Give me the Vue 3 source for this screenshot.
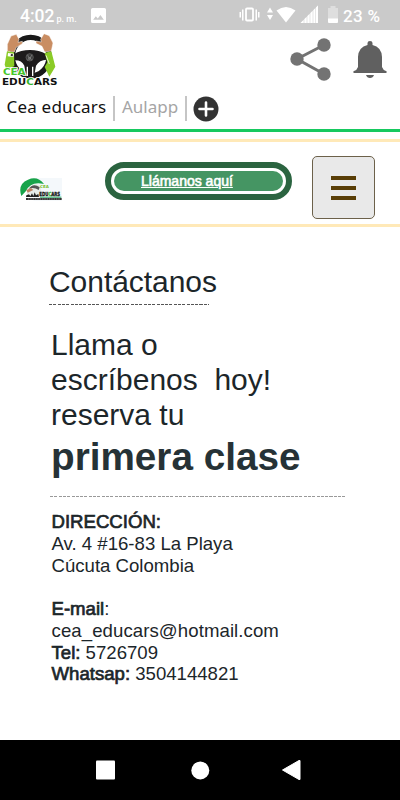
<template>
  <div class="screen">
    <header class="status-bar">
      <span class="time">4:02</span>
      <span class="period">p. m.</span>
      <svg class="photo-icon" viewBox="0 0 14 14">
        <path fill="#fff" fill-rule="evenodd" d="M1.500 0h11q1.500 0 1.500 1.500v11q0 1.500-1.500 1.500h-11Q0 14 0 12.500v-11Q0 0 1.500 0ZM2 11h10L8.800 6.500 6.300 9.700 4.500 7.700Z" />
      </svg>
      <svg class="status-icons" viewBox="0 0 102 30" fill="#fff">
        <rect x="7" y="8.500" width="7" height="12" rx="1" fill="none" stroke="#fff" stroke-width="1.800" />
        <path d="M3 9.500h1.500v11H3zM16.500 9.500H18v11h-1.500zM.5 12H2v5.500H.5zM19 12h1.500v5.500H19z" />
        <path d="M28 12.500l3-5 3 5zM28 15h6l-3 5z" />
        <path d="M37.500 10.500Q47 3.500 56.500 10.500L47 22.500Z" />
        <path fill="#e6e6e6" d="M61.500 23L79 5.500V23z" />
        <path d="M61.500 23l3-3v3zM65.500 19l2-2v6h-2zM68.500 16l2-2v9h-2zM71.500 13l2-2v12h-2zM74.500 10l1.500-1.500V23h-1.500zM77 7.500l2-2V23h-2z" />
        <path fill="#dedede" d="M89 8h2.500V6h5v2H99v11H89z" />
        <path d="M89 18.500h10V22q0 1-1 1h-8q-1 0-1-1z" />
      </svg>
      <span class="battery">23 %</span>
    </header>

    <div class="app-bar">
      <svg class="logo" viewBox="0 0 180 180">
        <!-- steering wheel -->
        <ellipse cx="92" cy="80" rx="55" ry="58" fill="none" stroke="#191919" stroke-width="16" />
        <path fill="#1d1b1c" d="M42 72Q62 60 90 60t48 12l2 17q-22 0-32 18l-6 33H78l-5-33Q64 89 42 91Z" />
        <path d="M82 110v28M98 110v28" stroke="#fff" stroke-width="4" />
        <circle cx="89" cy="82" r="11" fill="#3b3b3b" stroke="#6a6a6a" stroke-width="2" />
        <path d="M83 75l6 14 6-14M83 91l6-10 6 10" fill="none" stroke="#909090" stroke-width="2" />
        <!-- hands and sleeves -->
        <path fill="#c98d62" stroke="#fff" stroke-width="1.500" d="M22 43l11-25 16-5 8 15-3 9 13-3v7L49 52l-6 14-21-2Z" />
        <path fill="#c98d62" stroke="#fff" stroke-width="1.500" d="M159 39l-11-22-16-6-10 17 2 8-16-3v7l18 9 8 17 20-3Z" />
        <path fill="#8bcb27" d="M21 64l21 3 1 42-24 9-5-14Z" />
        <path fill="#8bcb27" d="M134 69l20-5 12 46-18 30-14-29 8-14Z" />
        <path d="M24 69l18 2-2 10-17-2Z" fill="#fff" />
        <path d="M33 72l6 1-1 6-6-1Z" fill="#333" />
        <path d="M138 76l10 26" stroke="#eaf7d5" stroke-width="3" />
        <text transform="translate(9 136) scale(1.290 1)" font-size="24" fill="#46c62b" stroke="#fff" stroke-width="5" paint-order="stroke">CEA</text>
        <text transform="translate(6 165) scale(1.160 1)" font-size="27" fill="#111" stroke="#fff" stroke-width="5" paint-order="stroke">EDU<tspan fill="#35b52a">C</tspan>ARS</text>
      </svg>
      <svg class="share" viewBox="0 0 44 46">
        <path d="M34 9L7 23l27 15" fill="none" stroke="#737373" stroke-width="3" />
        <circle cx="34" cy="9" r="6.700" fill="#737373" />
        <circle cx="7" cy="23" r="6.700" fill="#737373" />
        <circle cx="34" cy="38" r="6.700" fill="#737373" />
      </svg>
      <svg class="bell" viewBox="0 0 34 38" fill="#606060">
        <path d="M14.500 3q0-2 2.500-2t2.500 2v2q9 2 9.500 12v10q1 3 4 4H1q3-1 4-4V17Q5.500 7 14.500 5Z" />
        <path d="M.5 31h33v2H.5zM13 35h8q-1 3-4 3t-4-3z" />
      </svg>
    </div>

    <nav class="tabs">
      <span class="tab active">Cea educars</span>
      <span class="divider"></span>
      <span class="tab muted">Aulapp</span>
      <span class="divider"></span>
      <svg class="add" viewBox="0 0 26 26">
        <circle cx="13" cy="13" r="12.500" fill="#333" />
        <path d="M13 6.500v13M6.500 13h13" stroke="#fff" stroke-width="2.600" stroke-linecap="round" />
      </svg>
    </nav>

    <section class="site-header">
      <svg class="site-logo" viewBox="0 0 126 72">
        <path fill="#f4f8fb" d="M40 0h86v68H40z" />
        <path fill="#18a34a" d="M4 54Q-8 18 24 5q29-12 48 13Q33 8 18 39Z" />
        <path fill="#e7ece9" d="M19 49l14-25q14-12 29-1l3 31Z" />
        <path fill="#555" d="M25 33q15-20 34-5l-3 8q-15-10-31-3Z" />
        <path fill="#bd8062" d="M19 36l14-6 7 6-17 8z" />
        <path fill="#222" d="M19 52l8-3 4 5 5-8 4 8 4-11 4 9 7-4 2 9H18Z" />
        <path fill="#333" d="M18 60h107v6H18z" />
        <path d="M24 63h96" stroke="#aaa" stroke-width="2" stroke-dasharray="4 3" />
        <path fill="#20a559" d="M60 56h64v3H60z" />
        <text transform="translate(60 31)" font-size="12" fill="#74bd28">CEA</text>
        <text transform="translate(58 53) scale(0.690 1)" font-size="17" fill="#111" stroke="#111" stroke-width="1">EDU<tspan fill="#39b52d" stroke="#39b52d">C</tspan>ARS</text>
      </svg>
      <a class="call"><span>Llámanos aquí</span></a>
      <button class="menu" aria-label="Menu">
        <i></i><i></i><i></i>
      </button>
    </section>

    <main class="content">
      <h1>Contáctanos</h1>
      <div class="rule short"></div>
      <p class="lead">
        Llama o<br />
        escríbenos&nbsp; hoy!<br />
        reserva tu
      </p>
      <p class="lead-strong">primera clase</p>
      <div class="rule long"></div>
      <div class="details">
        <div v-for="(line, i) in details" :key="i" class="line">
          <b v-if="line.label">{{ line.label }}</b>{{ line.text }}
        </div>
      </div>
    </main>

    <footer class="nav-bar">
      <svg viewBox="0 0 20 20"><rect x="1" y="0.500" width="19" height="19" rx="1" fill="#fff" /></svg>
      <svg viewBox="0 0 20 20"><circle cx="12.300" cy="10.500" r="9" fill="#fff" /></svg>
      <svg viewBox="0 0 20 20"><path d="M1.500 10L18 .5h1v19h-1Z" fill="#fff" stroke="#fff" stroke-linejoin="round" /></svg>
    </footer>
  </div>
</template>

<script setup>
const details = [
  { label: 'DIRECCIÓN:', text: '' },
  { label: '', text: 'Av. 4 #16-83 La Playa' },
  { label: '', text: 'Cúcuta Colombia' },
  { label: '', text: '' },
  { label: 'E-mail', text: ':' },
  { label: '', text: 'cea_educars@hotmail.com' },
  { label: 'Tel:', text: ' 5726709' },
  { label: 'Whatsap:', text: ' 3504144821' }
]
</script>

<style>
body {
  margin: 0;
  background: #fff;
}
</style>

<style scoped>
.screen {
  width: 400px;
  height: 800px;
  display: flex;
  flex-direction: column;
  overflow: hidden;
  background: #fff;
  font-family: "Liberation Sans", Arial, sans-serif;
  color: #1c262a;
}
.status-bar {
  height: 30px;
  flex: none;
  display: flex;
  background: #cacaca;
  color: #fff;
  font-family: Roboto, sans-serif;
  font-weight: 500;
  line-height: 32px;
  white-space: nowrap;
}
.time {
  width: 36.500px;
  margin-left: 20px;
  font-size: 17.500px;
}
.period {
  width: 34.500px;
  font-size: 9px;
  line-height: 38px;
}
.photo-icon {
  width: 15px;
  height: 15px;
  margin-top: 8px;
}
.status-icons {
  width: 102px;
  height: 30px;
  margin-left: 133px;
}
.battery {
  margin-left: 2px;
  font-size: 17px;
  letter-spacing: 0.3px;
}
.app-bar {
  height: 60px;
  flex: none;
  display: flex;
}
.logo {
  width: 60px;
  height: 60px;
  font-family: "DejaVu Sans", sans-serif;
  font-weight: bold;
}
.share {
  width: 44px;
  height: 46px;
  margin: 6px 0 0 230px;
}
.bell {
  width: 34px;
  height: 38px;
  margin: 10px 0 0 19px;
}
.tabs {
  height: 39px;
  flex: none;
  display: flex;
  border-bottom: 3px solid #16c95f;
  font-family: "Noto Sans", sans-serif;
  font-size: 17px;
  line-height: 34px;
  white-space: nowrap;
}
.tab.active {
  width: 106px;
  text-indent: 6.500px;
  letter-spacing: 0.200px;
  color: #111;
}
.tab.muted {
  width: 63px;
  text-indent: 7px;
  color: #a5a5a5;
}
.divider {
  width: 2px;
  height: 25px;
  margin-top: 6px;
  margin-left: 7px;
  background: #c5c5c5;
}
.add {
  width: 26px;
  height: 26px;
  margin: 6px 0 0 6px;
}
.site-header {
  height: 82px;
  flex: none;
  margin-top: 7px;
  display: flex;
  border-top: 3px solid #ffe9b8;
  border-bottom: 3px solid #ffe9b8;
}
.site-logo {
  width: 42px;
  height: 24px;
  margin: 36px 0 0 20px;
  font-family: "DejaVu Sans", sans-serif;
  font-weight: bold;
}
.call {
  width: 187px;
  height: 38px;
  box-sizing: border-box;
  margin: 20px 0 0 43px;
  padding: 3px;
  border: 6px solid #2b6440;
  border-radius: 19px;
  background: #fff;
  color: #fff;
}
.call span {
  display: block;
  height: 20px;
  padding-left: 27px;
  border-radius: 10px;
  background: #459563;
  font-size: 14px;
  line-height: 20px;
  text-decoration: underline;
  white-space: nowrap;
  -webkit-text-stroke: 0.6px #fff;
}
.menu {
  width: 63px;
  height: 63px;
  box-sizing: border-box;
  margin: 14px 0 0 20px;
  padding: 0;
  display: flex;
  flex-direction: column;
  align-items: center;
  justify-content: center;
  gap: 6px;
  border: 1px solid #6c614a;
  border-radius: 5px;
  background: #e9e9e9;
}
.menu i {
  width: 25px;
  height: 4px;
  background: #593e07;
}
.content {
  flex: 1;
  padding: 37px 0 0 49px;
}
h1 {
  margin: 0;
  font-size: 30px;
  font-weight: 400;
  line-height: 35px;
  letter-spacing: -0.050px;
}
.rule {
  height: 1px;
}
.short {
  width: 160px;
  margin-top: 5px;
  background: repeating-linear-gradient(90deg, #555 0 3px, transparent 3px 4.300px);
}
.lead {
  margin: 22px 0 0 2px;
  font-size: 30px;
  line-height: 35px;
}
.lead-strong {
  margin: 2px 0 0 2px;
  font-size: 38.700px;
  font-weight: bold;
  line-height: 46px;
  color: #263236;
}
.long {
  width: 295px;
  margin: 16px 0 0 1px;
  background: repeating-linear-gradient(90deg, #999 0 3px, transparent 3px 4.300px);
}
.details {
  margin: 14px 0 0 2.500px;
  font-size: 18.600px;
  line-height: 21.750px;
}
.line {
  height: 21.750px;
  white-space: pre;
}
.line:nth-child(6) {
  letter-spacing: 0.080px;
}
.line b {
  font-weight: 400;
  -webkit-text-stroke: 0.7px #1c262a;
}
.nav-bar {
  height: 60px;
  flex: none;
  display: flex;
  justify-content: space-between;
  align-items: center;
  padding: 0 99px 0 95px;
  background: #000;
}
.nav-bar svg {
  width: 20px;
  height: 20px;
  overflow: visible;
}
</style>
